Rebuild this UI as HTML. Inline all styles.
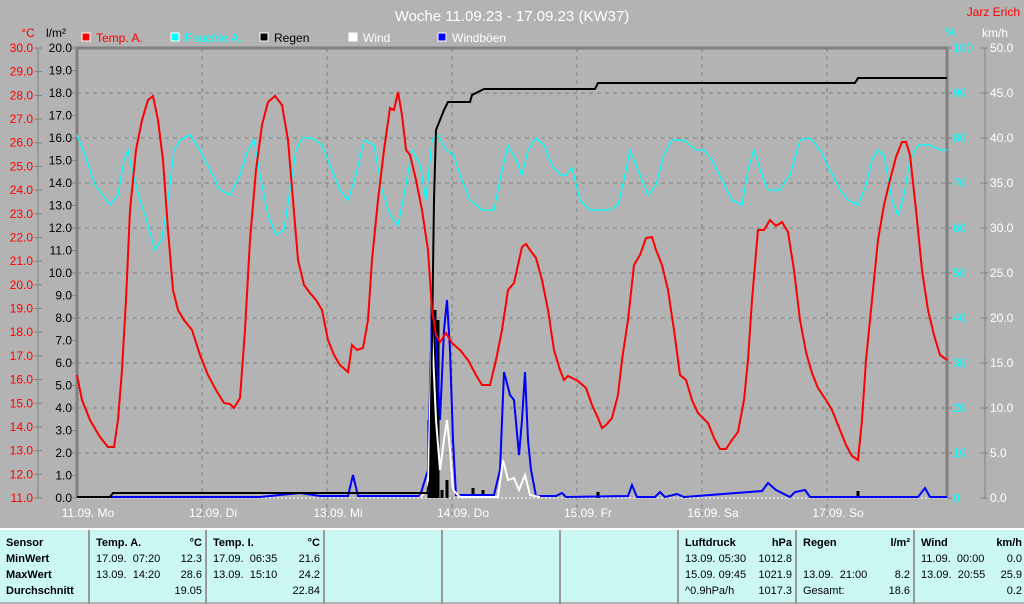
<!DOCTYPE html>
<html><head><meta charset="utf-8"><style>
body{margin:0;width:1024px;height:602px;overflow:hidden;background:#b3b3b3;font-family:"Liberation Sans",sans-serif;}
svg{position:absolute;left:0;top:0}
.tb{position:absolute;left:0;top:528px;width:1024px;height:74px;background:#ccf8f4;border-top:2px solid #fff;box-sizing:border-box}
.col{position:absolute;top:0;height:74px;border-left:2px solid #999;font-size:11px;line-height:16px;padding-top:5px;box-sizing:border-box}
.r{display:flex;justify-content:space-between;height:16px;padding:0 3px 0 6px;white-space:nowrap}
.b{font-weight:bold}
</style></head><body>
<svg width="1024" height="528" font-family="Liberation Sans, sans-serif">
<text x="512" y="21" fill="#fff" font-size="15" text-anchor="middle">Woche 11.09.23 - 17.09.23 (KW37)</text>
<text x="1020" y="16" fill="#f00" font-size="12" text-anchor="end">Jarz Erich</text>
<text x="28" y="37" fill="#f00" font-size="12" text-anchor="middle">°C</text>
<text x="56" y="37" fill="#000" font-size="12" text-anchor="middle">l/m²</text>
<text x="951" y="36" fill="#0ff" font-size="12" text-anchor="middle">%</text>
<text x="995" y="37" fill="#fff" font-size="12" text-anchor="middle">km/h</text>
<g font-size="12">
<rect x="82" y="33" width="8" height="8" fill="#f00" stroke="#fff"/><text x="96" y="42" fill="#f00">Temp. A.</text>
<rect x="171" y="33" width="8" height="8" fill="#0ff" stroke="#fff"/><text x="185" y="42" fill="#0ff">Feuchte A.</text>
<rect x="260" y="33" width="8" height="8" fill="#000" stroke="#fff"/><text x="274" y="42" fill="#000">Regen</text>
<rect x="349" y="33" width="8" height="8" fill="#fff" stroke="#fff"/><text x="363" y="42" fill="#fff">Wind</text>
<rect x="438" y="33" width="8" height="8" fill="#00f" stroke="#fff"/><text x="452" y="42" fill="#fff">Windböen</text>
</g>
<g stroke="#808080" stroke-width="1" stroke-dasharray="4,4">
<line x1="77" y1="93" x2="947" y2="93"/><line x1="77" y1="138" x2="947" y2="138"/><line x1="77" y1="183" x2="947" y2="183"/><line x1="77" y1="228" x2="947" y2="228"/><line x1="77" y1="273" x2="947" y2="273"/><line x1="77" y1="318" x2="947" y2="318"/><line x1="77" y1="363" x2="947" y2="363"/><line x1="77" y1="408" x2="947" y2="408"/><line x1="77" y1="453" x2="947" y2="453"/>
<line x1="202" y1="48" x2="202" y2="520"/><line x1="327" y1="48" x2="327" y2="520"/><line x1="452" y1="48" x2="452" y2="520"/><line x1="577" y1="48" x2="577" y2="520"/><line x1="702" y1="48" x2="702" y2="520"/><line x1="827" y1="48" x2="827" y2="520"/>
</g>
<g stroke="#808080" stroke-width="3" fill="none"><polyline points="77,498 77,48 947,48 947,498"/></g>
<line x1="77" y1="498" x2="947" y2="498" stroke="#fff" stroke-dasharray="2,2"/>
<g stroke="#808080"><line x1="38" y1="48" x2="38" y2="498"/><line x1="985" y1="48" x2="985" y2="498"/></g>
<g font-size="12" fill="#f00" text-anchor="end" id="tl"></g>
<g font-size="12" fill="#000" text-anchor="end" id="rl"></g>
<g font-size="12" fill="#0ff" id="hl"></g>
<g font-size="12" fill="#fff" id="kl"></g>
<g font-size="12" fill="#fff" text-anchor="middle">
<text x="88" y="517">11.09.  Mo</text><text x="213" y="517">12.09.  Di</text><text x="338" y="517">13.09.  Mi</text><text x="463" y="517">14.09.  Do</text><text x="588" y="517">15.09.  Fr</text><text x="713" y="517">16.09.  Sa</text><text x="838" y="517">17.09.  So</text>
</g>
<polyline fill="none" stroke="#0ff" stroke-width="1.3" points="77,135 85,155 95,185 110,205 118,195 124,160 128,150 132,170 140,200 148,225 155,250 162,238 168,200 174,150 180,140 190,135 200,150 210,170 220,190 230,195 240,175 248,150 254,140 260,175 268,215 276,235 284,230 290,190 296,150 302,138 312,138 322,145 330,165 340,190 348,200 356,175 364,140 374,145 382,190 390,215 398,225 404,195 412,150 420,165 426,200 432,140 438,135 446,150 454,155 460,175 470,200 482,210 494,210 500,180 508,145 516,160 522,175 528,150 536,138 544,145 552,165 560,175 566,175 572,168 580,200 590,210 610,210 618,205 624,180 630,150 638,170 648,195 656,185 664,155 672,140 684,140 696,150 704,150 712,160 722,180 732,200 742,205 748,170 754,150 760,170 768,190 780,190 790,175 800,140 810,138 820,150 830,170 840,190 848,200 858,205 866,185 872,160 878,150 884,155 892,200 898,215 904,195 910,160 918,145 930,145 940,150 947,150"/>
<g stroke="#000" stroke-width="3">
<line x1="429" y1="498" x2="429" y2="420"/><line x1="432" y1="498" x2="432" y2="300"/><line x1="435" y1="498" x2="435" y2="310"/><line x1="438" y1="498" x2="438" y2="320"/><line x1="442" y1="498" x2="442" y2="490"/><line x1="447" y1="498" x2="447" y2="480"/><line x1="473" y1="498" x2="473" y2="488"/><line x1="483" y1="498" x2="483" y2="490"/><line x1="598" y1="498" x2="598" y2="492"/><line x1="858" y1="498" x2="858" y2="491"/>
</g>
<polyline fill="none" stroke="#00f" stroke-width="2" points="77,497 260,497 300,493 320,496 348,496 353,475 358,496 420,496 428,470 432,305 436,340 440,420 444,330 447,300 450,350 453,440 456,495 470,495 494,495 500,470 504,372 510,395 514,400 519,455 522,420 525,372 528,440 531,470 536,496 556,496 562,493 566,497 628,496 632,485 637,497 655,497 660,492 665,497 677,494 684,497 762,491 768,483 776,490 790,497 795,492 805,490 810,497 918,497 925,488 930,497 947,497"/>
<polyline fill="none" stroke="#fff" stroke-width="2" points="420,497 428,490 432,330 436,420 440,470 444,440 447,420 450,450 453,490 460,497 498,497 503,460 508,480 514,478 519,490 525,475 530,495 540,497"/>
<polyline fill="none" stroke="#000" stroke-width="2" points="77,497 110,497 113,493 427,493 430,480 434,200 436,130 440,120 444,110 448,102 470,102 472,95 478,92 484,89 595,89 598,83 855,83 858,78 947,78"/>
<polyline fill="none" stroke="#f00" stroke-width="2" points="77,375 82,400 90,420 100,437 108,447 114,447 118,420 122,370 126,300 130,210 136,150 142,120 148,100 153,96 158,120 163,160 168,230 173,290 178,310 184,320 192,330 200,355 208,375 216,390 224,403 230,404 234,408 240,398 245,330 250,240 256,170 262,125 268,102 275,96 282,105 288,140 293,200 298,260 304,285 310,293 316,300 322,310 328,340 334,355 340,365 348,372 352,345 357,350 363,348 368,320 372,260 378,200 384,150 390,108 394,110 398,92 402,115 406,150 410,155 416,180 422,210 428,250 432,310 436,335 440,342 446,333 452,343 460,350 468,360 476,375 482,385 490,385 496,360 502,330 508,290 514,283 518,265 522,247 526,244 530,250 536,258 542,280 548,310 554,350 560,370 564,380 568,376 572,378 578,381 586,388 592,405 598,418 602,428 606,425 612,418 618,395 622,360 628,320 634,265 640,255 646,238 652,237 656,250 662,265 668,290 674,330 680,375 686,380 692,400 698,413 708,423 714,438 720,449 726,449 732,440 738,432 744,400 748,360 752,300 758,230 764,230 770,220 776,226 782,222 788,232 794,270 800,320 806,352 812,373 818,388 826,400 832,410 838,425 846,445 852,456 858,460 862,420 866,360 872,300 878,240 884,205 890,180 896,157 902,142 906,142 910,155 916,210 922,270 928,310 934,335 940,355 947,360"/>
</svg>
<script>
(function(){var ns="http://www.w3.org/2000/svg";
function t(g,x,y,s){var e=document.createElementNS(ns,"text");e.setAttribute("x",x);e.setAttribute("y",y);e.textContent=s;document.getElementById(g).appendChild(e);}
function l(x1,x2,y){var e=document.createElementNS(ns,"line");e.setAttribute("x1",x1);e.setAttribute("x2",x2);e.setAttribute("y1",y);e.setAttribute("y2",y);e.setAttribute("stroke","#808080");document.querySelector("svg").appendChild(e);}
for(var i=0;i<=19;i++){var y=48+i*450/19;t("tl",33,y+4,(30-i).toFixed(1));l(34,42,y);}
for(var i=0;i<=20;i++){var y=48+i*22.5;t("rl",72,y+4,(20-i).toFixed(1));l(72,77,y);}
for(var i=0;i<=10;i++){var y=48+i*45;t("hl",953,y+4,String(100-i*10));l(947,952,y);t("kl",990,y+4,(50-i*5).toFixed(1));l(980,988,y);}
})();
</script>
<div class="tb">
<div class="col" style="left:0;width:88px;border-left:none"><div class="r b"><span>Sensor</span></div><div class="r b"><span>MinWert</span></div><div class="r b"><span>MaxWert</span></div><div class="r b"><span>Durchschnitt</span></div></div>
<div class="col" style="left:88px;width:117px"><div class="r b"><span>Temp. A.</span><span>°C</span></div><div class="r"><span>17.09.&nbsp; 07:20</span><span>12.3</span></div><div class="r"><span>13.09.&nbsp; 14:20</span><span>28.6</span></div><div class="r"><span></span><span>19.05</span></div></div>
<div class="col" style="left:205px;width:118px"><div class="r b"><span>Temp. I.</span><span>°C</span></div><div class="r"><span>17.09.&nbsp; 06:35</span><span>21.6</span></div><div class="r"><span>13.09.&nbsp; 15:10</span><span>24.2</span></div><div class="r"><span></span><span>22.84</span></div></div>
<div class="col" style="left:323px;width:118px"></div>
<div class="col" style="left:441px;width:118px"></div>
<div class="col" style="left:559px;width:118px"></div>
<div class="col" style="left:677px;width:118px"><div class="r b"><span>Luftdruck</span><span>hPa</span></div><div class="r"><span>13.09.&nbsp;05:30</span><span>1012.8</span></div><div class="r"><span>15.09.&nbsp;09:45</span><span>1021.9</span></div><div class="r"><span>^0.9hPa/h</span><span>1017.3</span></div></div>
<div class="col" style="left:795px;width:118px"><div class="r b"><span>Regen</span><span>l/m²</span></div><div class="r"><span></span></div><div class="r"><span>13.09.&nbsp; 21:00</span><span>8.2</span></div><div class="r"><span>Gesamt:</span><span>18.6</span></div></div>
<div class="col" style="left:913px;width:111px"><div class="r b" style="padding-right:2px"><span>Wind</span><span>km/h</span></div><div class="r" style="padding-right:2px"><span>11.09.&nbsp; 00:00</span><span>0.0</span></div><div class="r" style="padding-right:2px"><span>13.09.&nbsp; 20:55</span><span>25.9</span></div><div class="r" style="padding-right:2px"><span></span><span>0.2</span></div></div>
</div>
</body></html>
